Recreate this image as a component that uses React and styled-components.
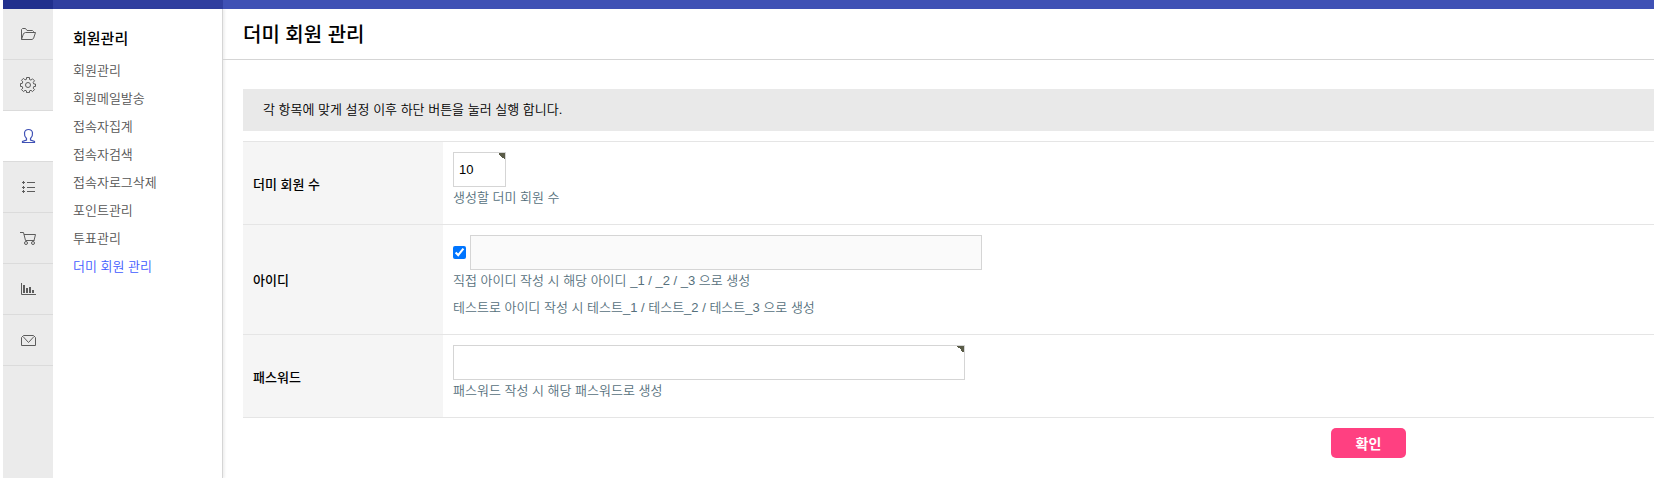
import React from "react";
import styled, { createGlobalStyle } from "styled-components";

const GlobalStyle = createGlobalStyle`
    * {
        box-sizing: border-box;
    }

    body {
        margin: 0;
        background: #fff;
        color: #000;
        font-family: "Liberation Sans", "Noto Sans CJK KR", sans-serif;
        font-size: 13px;
        font-weight: 350;
    }
`;

const Layout = styled.div`
    display: flex;
    min-height: 100vh;
    padding-left: 3px;
`;

const Rail = styled.nav`
    flex: none;
    width: 50px;
    border-top: 9px solid #21308d;
    background: #ebebeb;
`;

const RailLink = styled.a`
    display: flex;
    align-items: center;
    justify-content: center;
    height: 51px;
    border-bottom: 1px solid #dbdbdb;
    background: ${(props) => (props.$active ? "#fff" : "transparent")};
    color: ${(props) => (props.$active ? "#3f51b5" : "#5c5c5c")};
`;

const Icon = styled.svg`
    display: block;
    width: 16px;
    height: 16px;
    fill: none;
    stroke: currentColor;
    stroke-width: 1;
`;

const SideMenu = styled.nav`
    flex: none;
    width: 170px;
    border-top: 9px solid #303f9f;
`;

const MenuBody = styled.div`
    height: 100%;
    border-right: 1px solid #d5d5d5;
    box-shadow: 2px 0 2px rgba(0, 0, 0, 0.06);
`;

const MenuTitle = styled.h2`
    margin: 0;
    padding: 19px 20px 7px;
    font-size: 15px;
    font-weight: 500;
    line-height: 22px;
`;

const MenuList = styled.ul`
    margin: 0;
    padding: 0 20px;
    list-style: none;
`;

const MenuLink = styled.a`
    display: block;
    line-height: 28px;
    color: ${(props) => (props.$active ? "#3f5bff" : "#555")};
    text-decoration: none;
`;

const Main = styled.main`
    flex: 1;
    min-width: 0;
    border-top: 9px solid #3f51b5;
`;

const PageTitle = styled.h1`
    margin: 0;
    padding: 2px 20px 0;
    border-bottom: 1px solid #d5d5d5;
    font-size: 20px;
    font-weight: 500;
    line-height: 48px;
`;

const Form = styled.form`
    padding: 29px 0 20px 20px;
`;

const Notice = styled.p`
    margin: 0 0 10px;
    padding: 0 20px;
    background: #e9e9e9;
    line-height: 42px;
`;

const Table = styled.table`
    width: 100%;
    border-top: 1px solid #e5e5e5;
    border-spacing: 0;
`;

const HeadCell = styled.th`
    width: 200px;
    padding: 10px;
    border-bottom: 1px solid #e5e5e5;
    background: #f5f5f5;
    font-weight: 500;
    text-align: left;
`;

const Cell = styled.td`
    padding: 10px;
    border-bottom: 1px solid #e5e5e5;
`;

const Field = styled.div`
    display: flex;
    align-items: center;
    gap: 4px;
`;

const Checkbox = styled.input`
    width: 13px;
    height: 13px;
    margin: 0;
    accent-color: #0075ff;
`;

const TextInput = styled.input`
    width: ${(props) => props.$width};
    height: 35px;
    padding: 0 5px;
    border: 1px solid #d5d5d5;
    background: ${(props) =>
        props.required
            ? "linear-gradient(45deg, transparent 50%, #5a5c48 50%) top right / 7px 7px no-repeat #fff"
            : "#fafafa"};
    font: inherit;
`;

const Help = styled.p`
    margin: 0 0 5px;
    color: #56707c;
    line-height: 22px;
`;

const Actions = styled.div`
    display: flex;
    justify-content: flex-end;
    padding: 10px 15vw 0 0;
`;

const SubmitButton = styled.button`
    width: 75px;
    height: 30px;
    padding: 0;
    border: 0;
    border-radius: 5px;
    background: #ff4081;
    color: #fff;
    font: inherit;
    font-size: 14px;
    font-weight: 700;
`;

const railItems = [
    {
        label: "환경설정",
        icon: <path d="M1.5 13.5v-10l1-1h3l1.500 2h5.500l1 1v1M1.500 13.500h10.500l1.500-1 2-6H5.500l-2 1-2 6" />,
    },
    {
        label: "테마",
        icon: (
            <>
                <circle cx="8" cy="8" r="2.500" />
                <path d="M6.500.5h3v2l1.500.6 1.500-1.300 2 2-1.300 1.600.6 1.600h1.700v2.500h-1.700l-.6 1.600 1.300 1.500-2 2-1.500-1.300-1.500.6v1.700h-3v-1.700l-1.500-.6-1.500 1.300-2-2 1.300-1.500-.6-1.600H.5V6.500h1.700l.6-1.600-1.300-1.600 2-2L5 2.900l1.500-.6z" />
            </>
        ),
    },
    {
        label: "회원관리",
        active: true,
        icon: (
            <path
                d="M6.500 10.500C3.500 7.500 3.500 1.500 8.500 1.500s5 6 2 9v1.500l4 1.500v1h-12v-1l4-1.500z"
                strokeWidth="1.2"
            />
        ),
    },
    {
        label: "게시판관리",
        icon: <path d="M7 3.500h8M7 8.500h8M7 12.500h8M2 3.500h3M2 8.500h3M2 12.500h3M3.500 2v3M3.500 7v3M3.500 11v3" />,
    },
    {
        label: "쇼핑몰관리",
        icon: (
            <>
                <path d="M0 2.500h3.500l2 8h9M4 4.500h11.500l-1.500 6" />
                <circle cx="6" cy="13" r="1.500" />
                <circle cx="13" cy="13" r="1.500" />
            </>
        ),
    },
    {
        label: "쇼핑몰현황",
        icon: (
            <>
                <path d="M1.500 2v11.500H16" />
                <path d="M4 4v8M7 7v5M10 6v6M13 9v3" strokeWidth="2" />
            </>
        ),
    },
    {
        label: "SMS 관리",
        icon: <path d="M1.500 5.500l2-2h10l2 2v8h-14zM3 4.500l5.500 6 5.500-6" />,
    },
];

const menuItems = [
    "회원관리",
    "회원메일발송",
    "접속자집계",
    "접속자검색",
    "접속자로그삭제",
    "포인트관리",
    "투표관리",
    "더미 회원 관리",
];

const App = () => (
    <Layout>
        <GlobalStyle />
        <Rail>
            {railItems.map((item) => (
                <RailLink
                    key={item.label}
                    href="#"
                    aria-label={item.label}
                    $active={item.active}
                >
                    <Icon viewBox="0 0 16 16">{item.icon}</Icon>
                </RailLink>
            ))}
        </Rail>
        <SideMenu>
            <MenuBody>
                <MenuTitle>회원관리</MenuTitle>
                <MenuList>
                    {menuItems.map((name) => (
                        <li key={name}>
                            <MenuLink href="#" $active={name === "더미 회원 관리"}>
                                {name}
                            </MenuLink>
                        </li>
                    ))}
                </MenuList>
            </MenuBody>
        </SideMenu>
        <Main>
            <PageTitle>더미 회원 관리</PageTitle>
            <Form>
                <Notice>각 항목에 맞게 설정 이후 하단 버튼을 눌러 실행 합니다.</Notice>
                <Table>
                    <tbody>
                        <tr>
                            <HeadCell scope="row">
                                <label htmlFor="count">더미 회원 수</label>
                            </HeadCell>
                            <Cell>
                                <Field>
                                    <TextInput id="count" defaultValue="10" required $width="53px" />
                                </Field>
                                <Help>생성할 더미 회원 수</Help>
                            </Cell>
                        </tr>
                        <tr>
                            <HeadCell scope="row">
                                <label htmlFor="userId">아이디</label>
                            </HeadCell>
                            <Cell>
                                <Field>
                                    <Checkbox type="checkbox" aria-label="아이디 직접 작성" defaultChecked />
                                    <TextInput id="userId" $width="512px" />
                                </Field>
                                <Help>직접 아이디 작성 시 해당 아이디 _1 / _2 / _3 으로 생성</Help>
                                <Help>테스트로 아이디 작성 시 테스트_1 / 테스트_2 / 테스트_3 으로 생성</Help>
                            </Cell>
                        </tr>
                        <tr>
                            <HeadCell scope="row">
                                <label htmlFor="password">패스워드</label>
                            </HeadCell>
                            <Cell>
                                <Field>
                                    <TextInput id="password" type="password" required $width="512px" />
                                </Field>
                                <Help>패스워드 작성 시 해당 패스워드로 생성</Help>
                            </Cell>
                        </tr>
                    </tbody>
                </Table>
                <Actions>
                    <SubmitButton type="button">확인</SubmitButton>
                </Actions>
            </Form>
        </Main>
    </Layout>
);

export default App;
